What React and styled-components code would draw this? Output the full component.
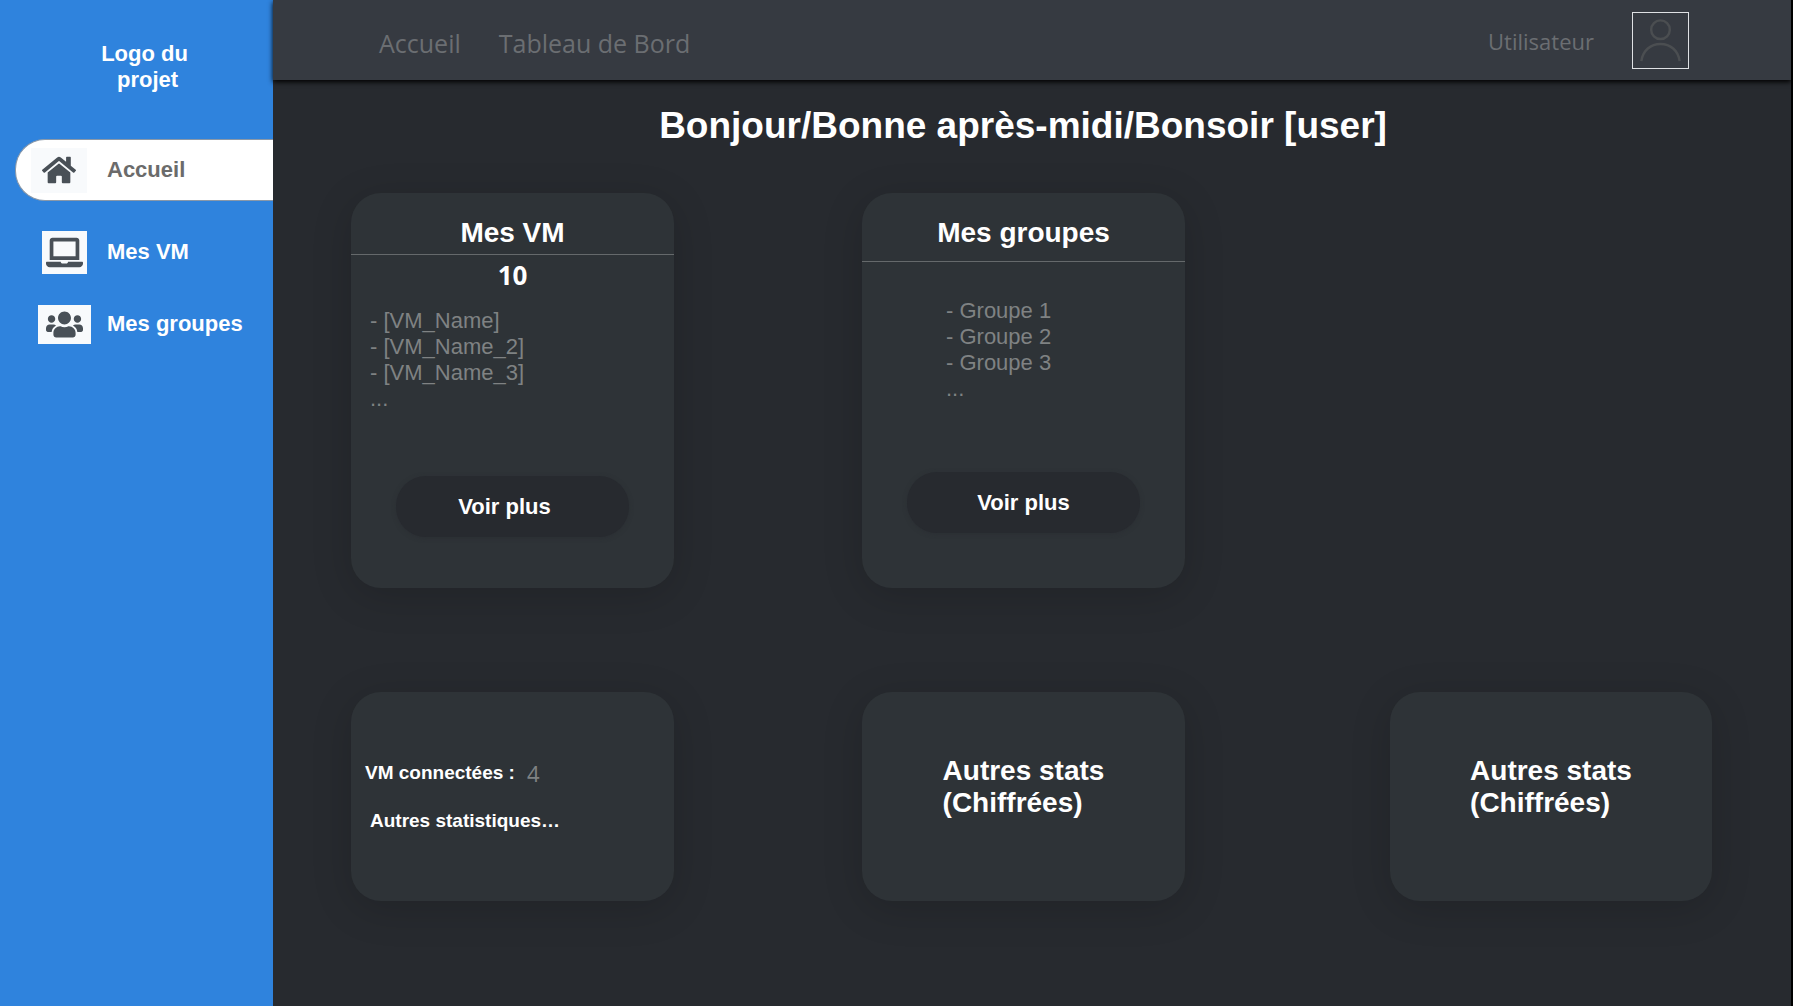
import React from "react";
import styled, { createGlobalStyle } from "styled-components";
import { FaHome, FaLaptop, FaUsers } from "react-icons/fa";

const GlobalStyle = createGlobalStyle`
  *, *::before, *::after { box-sizing: border-box; }
  body {
    margin: 0;
    background: #000;
    color: #fff;
    font-family: "Liberation Sans", Arial, sans-serif;
    font-size: 22px;
    line-height: 26px;
  }
  h1, h2, p, ul { margin: 0; padding: 0; }
  ul { list-style: none; }
  a { color: inherit; text-decoration: none; }
`;

const Page = styled.div`
  display: flex;
  min-height: 100vh;
  padding-right: 2px;
`;

const Sidebar = styled.aside`
  flex: 0 0 273px;
  padding: 41px 0;
  background: #2f83dd;
  font-weight: 700;
`;

const Logo = styled.p`
  padding-left: 16px;
  text-align: center;
`;

const SideNav = styled.nav`
  display: flex;
  flex-direction: column;
  gap: 10px;
  margin-top: 46px;
  padding-left: 15px;
`;

const SideLink = styled.a`
  display: flex;
  align-items: center;
  height: 62px;
  border: 1px solid transparent;
  border-right: 0;
  ${({ $active }) =>
    $active &&
    `
    margin-bottom: 10px;
    border-color: #8a98a8;
    border-radius: 30px 0 0 30px;
    background: #fff;
    color: #6b6b6b;
  `}
`;

const IconCell = styled.span`
  display: flex;
  justify-content: flex-end;
  width: 91px;
  padding-right: ${({ $gap }) => $gap}px;
`;

const IconBox = styled.span`
  display: flex;
  align-items: center;
  justify-content: center;
  width: ${({ $w }) => $w}px;
  height: ${({ $h }) => $h}px;
  background: #f8fafc;
  color: #495057;
`;

const Main = styled.div`
  flex: 1;
  min-width: 0;
  background: #272a2f;
`;

const TopBar = styled.header`
  position: relative;
  display: flex;
  align-items: center;
  justify-content: space-between;
  height: 80px;
  padding: 0 102px 0 106px;
  background: #363a41;
  box-shadow: 0 2px 5px #000;
  color: #6b6e72;
  font-family: "Open Sans", "Noto Sans", sans-serif;
`;

const TopNav = styled.nav`
  display: flex;
  gap: 38px;
  padding-top: 6px;
  font-size: 25px;
`;

const User = styled.a`
  display: flex;
  align-items: center;
  gap: 38px;
  padding-top: 1px;
`;

const Avatar = styled.span`
  display: flex;
  width: 57px;
  height: 57px;
  border: 1px solid #dfe1e4;
  color: #4b4e51;
`;

const Content = styled.main`
  padding: 25px 79px 104px 78px;
`;

const Greeting = styled.h1`
  padding-right: 17px;
  font-size: 37px;
  line-height: 42px;
  text-align: center;
`;

const Cards = styled.div`
  display: grid;
  grid-template-columns: 511fr 528fr 322fr;
  row-gap: 104px;
  margin-top: 46px;
`;

const Card = styled.section`
  display: flex;
  flex-direction: column;
  max-width: 323px;
  min-height: ${({ $tall }) => ($tall ? 395 : 209)}px;
  padding-bottom: ${({ $bottom = 0 }) => $bottom}px;
  border-radius: 30px;
  background: #2e3337;
  box-shadow: 0 8px 40px rgba(0, 0, 0, 0.16);
`;

const CardTitle = styled.h2`
  padding: 24px 0 ${({ $space }) => $space}px;
  border-bottom: 1px solid #65696b;
  font-size: 28px;
  line-height: 32px;
  text-align: center;
`;

const Count = styled.p`
  padding: 4px 0 8px;
  font-family: "Open Sans", sans-serif;
  font-size: 26px;
  font-weight: 700;
  line-height: 32px;
  text-align: center;
`;

const NameList = styled.ul`
  padding: ${({ $top }) => $top}px 0 0 ${({ $left }) => $left}px;
  color: #7f8283;
`;

const MoreButton = styled.button`
  align-self: center;
  width: 233px;
  height: 61px;
  margin-top: auto;
  padding: 0 ${({ $shift = 0 }) => $shift}px 0 0;
  border: 0;
  border-radius: 30px;
  background: #272a2f;
  box-shadow: 0 1px 4px rgba(39, 42, 47, 0.5);
  color: #fff;
  font: inherit;
  font-weight: 700;
  cursor: pointer;
`;

const Stats = styled.div`
  display: flex;
  flex-direction: column;
  gap: 22px;
  padding: 68px 14px 0;
  font-size: 19px;
  font-weight: 700;
`;

const StatRow = styled.p`
  display: flex;
  gap: 12px;
  padding-left: ${({ $indent = 0 }) => $indent}px;
`;

const StatValue = styled.span`
  color: #7f8283;
  font-family: "Open Sans", sans-serif;
  font-size: 22px;
  font-weight: 400;
`;

const StatTitle = styled.h2`
  align-self: center;
  padding-top: 63px;
  font-size: 28px;
  line-height: 32px;
`;

const links = [
  { label: "Accueil", Icon: FaHome, size: 34, w: 56, h: 45, gap: 20, active: true },
  { label: "Mes VM", Icon: FaLaptop, size: 37, w: 45, h: 43, gap: 20 },
  { label: "Mes groupes", Icon: FaUsers, size: 37, w: 53, h: 39, gap: 16 },
];

function OtherStats() {
  return (
    <Card>
      <StatTitle>
        Autres stats
        <br />
        (Chiffrées)
      </StatTitle>
    </Card>
  );
}

export default function App() {
  return (
    <>
      <GlobalStyle />
      <Page>
        <Sidebar>
          <Logo>
            Logo du
            <br />
            &nbsp;projet
          </Logo>
          <SideNav>
            {links.map(({ label, Icon, size, w, h, gap, active }) => (
              <SideLink key={label} href="#" $active={active}>
                <IconCell $gap={gap}>
                  <IconBox $w={w} $h={h}>
                    <Icon size={size} />
                  </IconBox>
                </IconCell>
                {label}
              </SideLink>
            ))}
          </SideNav>
        </Sidebar>
        <Main>
          <TopBar>
            <TopNav>
              <a href="#">Accueil</a>
              <a href="#">Tableau de Bord</a>
            </TopNav>
            <User href="#">
              Utilisateur
              <Avatar>
                <svg width="55" height="55" viewBox="0 0 56 56" fill="none" stroke="currentColor" strokeWidth="2.5">
                  <circle cx="28" cy="17" r="9.5" />
                  <path d="M8.5 49C10 38 18 31.500 28 31.500S46 38 47.500 49" />
                </svg>
              </Avatar>
            </User>
          </TopBar>
          <Content>
            <Greeting>Bonjour/Bonne après-midi/Bonsoir [user]</Greeting>
            <Cards>
              <Card $tall $bottom={51}>
                <CardTitle $space={5}>Mes VM</CardTitle>
                <Count>10</Count>
                <NameList $top={9} $left={19}>
                  <li>- [VM_Name]</li>
                  <li>- [VM_Name_2]</li>
                  <li>- [VM_Name_3]</li>
                  <li>...</li>
                </NameList>
                <MoreButton $shift={16}>Voir plus</MoreButton>
              </Card>
              <Card $tall $bottom={55}>
                <CardTitle $space={12}>Mes groupes</CardTitle>
                <NameList $top={36} $left={84}>
                  <li>- Groupe 1</li>
                  <li>- Groupe 2</li>
                  <li>- Groupe 3</li>
                  <li>...</li>
                </NameList>
                <MoreButton>Voir plus</MoreButton>
              </Card>
              <span />
              <Card>
                <Stats>
                  <StatRow>
                    VM connectées : <StatValue>4</StatValue>
                  </StatRow>
                  <StatRow $indent={5}>Autres statistiques…</StatRow>
                </Stats>
              </Card>
              <OtherStats />
              <OtherStats />
            </Cards>
          </Content>
        </Main>
      </Page>
    </>
  );
}
